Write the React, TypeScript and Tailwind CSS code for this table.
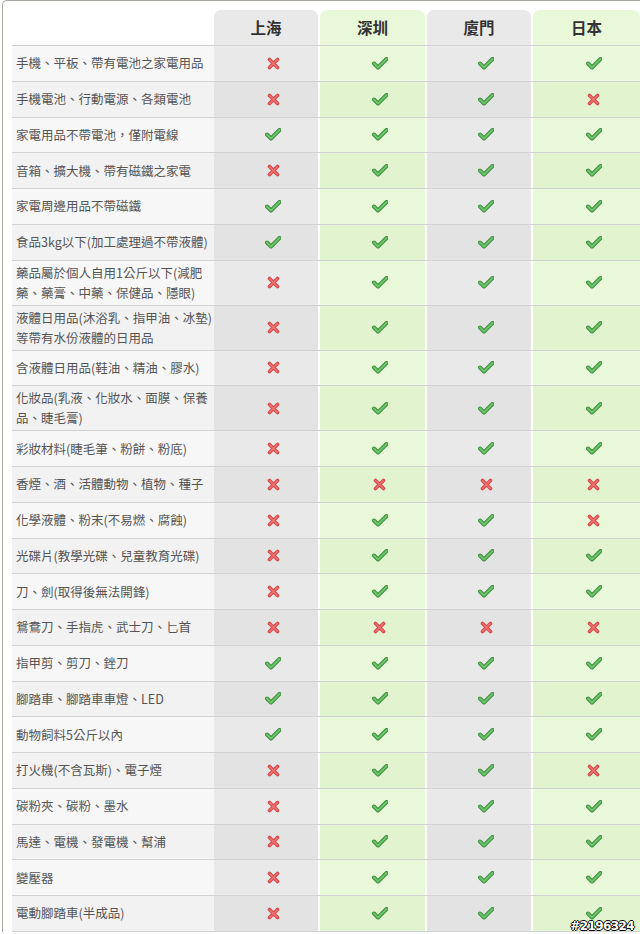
import React from "react";

type Row = { label: React.ReactNode; v: boolean[]; tall?: boolean };

const rows: Row[] = [
  { label: "手機、平板、帶有電池之家電用品", v: [false, true, true, true] },
  { label: "手機電池、行動電源、各類電池", v: [false, true, true, false] },
  { label: "家電用品不帶電池，僅附電線", v: [true, true, true, true] },
  { label: "音箱、擴大機、帶有磁鐵之家電", v: [false, true, true, true] },
  { label: "家電周邊用品不帶磁鐵", v: [true, true, true, true] },
  { label: "食品3kg以下(加工處理過不帶液體)", v: [true, true, true, true] },
  { label: <>藥品屬於個人自用1公斤以下(減肥<br />藥、藥膏、中藥、保健品、隱眼)</>, v: [false, true, true, true], tall: true },
  { label: <>液體日用品(沐浴乳、指甲油、冰墊)<br />等帶有水份液體的日用品</>, v: [false, true, true, true], tall: true },
  { label: "含液體日用品(鞋油、精油、膠水)", v: [false, true, true, true] },
  { label: <>化妝品(乳液、化妝水、面膜、保養<br />品、睫毛膏)</>, v: [false, true, true, true], tall: true },
  { label: "彩妝材料(睫毛筆、粉餅、粉底)", v: [false, true, true, true] },
  { label: "香煙、酒、活體動物、植物、種子", v: [false, false, false, false] },
  { label: "化學液體、粉末(不易燃、腐蝕)", v: [false, true, true, false] },
  { label: "光碟片(教學光碟、兒童教育光碟)", v: [false, true, true, true] },
  { label: "刀、劍(取得後無法開鋒)", v: [false, true, true, true] },
  { label: "鴛鴦刀、手指虎、武士刀、匕首", v: [false, false, false, false] },
  { label: "指甲剪、剪刀、銼刀", v: [true, true, true, true] },
  { label: "腳踏車、腳踏車車燈、LED", v: [true, true, true, true] },
  { label: "動物飼料5公斤以內", v: [true, true, true, true] },
  { label: "打火機(不含瓦斯)、電子煙", v: [false, true, true, false] },
  { label: "碳粉夾、碳粉、墨水", v: [false, true, true, true] },
  { label: "馬達、電機、發電機、幫浦", v: [false, true, true, true] },
  { label: "變壓器", v: [false, true, true, true] },
  { label: "電動腳踏車(半成品)", v: [false, true, true, true] },
];

const cols = [
  { name: "上海", w: "w-[104px]", green: false },
  { name: "深圳", w: "w-[105px]", green: true },
  { name: "廈門", w: "w-[104px]", green: false },
  { name: "日本", w: "w-[107px]", green: true },
];

function Check() {
  return (
    <svg width="16" height="13" viewBox="0 0 16 13">
      <path d="M2 6.5 L6 10.5 L14.5 2" fill="none" stroke="#3f8f3f" strokeWidth="4" strokeLinecap="round" strokeLinejoin="round" />
      <path d="M2 6.5 L6 10.5 L14.5 2" fill="none" stroke="#6cc46a" strokeWidth="2" strokeLinecap="round" strokeLinejoin="round" />
    </svg>
  );
}

function Cross() {
  return (
    <svg width="13" height="13" viewBox="0 0 13 13">
      <path d="M2.5 2.5 L10.5 10.5 M10.5 2.5 L2.5 10.5" fill="none" stroke="#d94a4a" strokeWidth="3.6" strokeLinecap="round" />
      <path d="M2.8 2.8 L10.2 10.2 M10.2 2.8 L2.8 10.2" fill="none" stroke="#ee7474" strokeWidth="1.4" strokeLinecap="round" />
    </svg>
  );
}

export default function App() {
  return (
    <div className="w-[640px] h-[934px] bg-white overflow-hidden relative font-['Noto_Sans_CJK_TC','Noto_Sans',sans-serif]">
      <div className="ml-[2px] border-l border-t border-[#aaa9a2] rounded-tl-[5px] pt-[9px] pl-[9px]">
        {/* header */}
        <div className="flex h-[36px] border-b border-[#d2d2d2]">
          <div className="w-[202px]" />
          <div className="flex gap-[2px]">
            {cols.map((c) => (
              <div
                key={c.name}
                className={`${c.w} rounded-t-[7px] flex items-center justify-center text-[15.5px] font-bold text-[#333] ${c.green ? "bg-[#e8f8d8]" : "bg-[#e9e9e9]"}`}
              >
                {c.name}
              </div>
            ))}
          </div>
        </div>
        {rows.map((r, i) => {
          const even = i % 2 === 1;
          return (
            <div
              key={i}
              className={`flex border-b border-[#d2d2d2] ${r.tall ? "h-[45px]" : "h-[35.75px]"}`}
            >
              <div className={`w-[202px] flex items-center pl-[4px] text-[12.5px] leading-[20px] text-[#555] whitespace-nowrap ${even ? "bg-[#f2f2f2]" : "bg-[#f7f7f7]"}`}>
                <span>{r.label}</span>
              </div>
              <div className="flex gap-[2px]">
                {cols.map((c, j) => (
                  <div
                    key={c.name}
                    className={`${c.w} flex items-center justify-center pl-[14px] ${
                      c.green
                        ? even ? "bg-[#e2f4cf]" : "bg-[#e8f8d8]"
                        : even ? "bg-[#e3e3e3]" : "bg-[#e9e9e9]"
                    }`}
                  >
                    {r.v[j] ? <Check /> : <Cross />}
                  </div>
                ))}
              </div>
            </div>
          );
        })}
      </div>
      <div className="absolute right-[6px] bottom-[-1px] text-[12px] font-bold text-white font-['DejaVu_Sans',sans-serif] tracking-tighter [text-shadow:1px_0_0_#000,-1px_0_0_#000,0_1px_0_#000,0_-1px_0_#000]">
        #2196324
      </div>
    </div>
  );
}
